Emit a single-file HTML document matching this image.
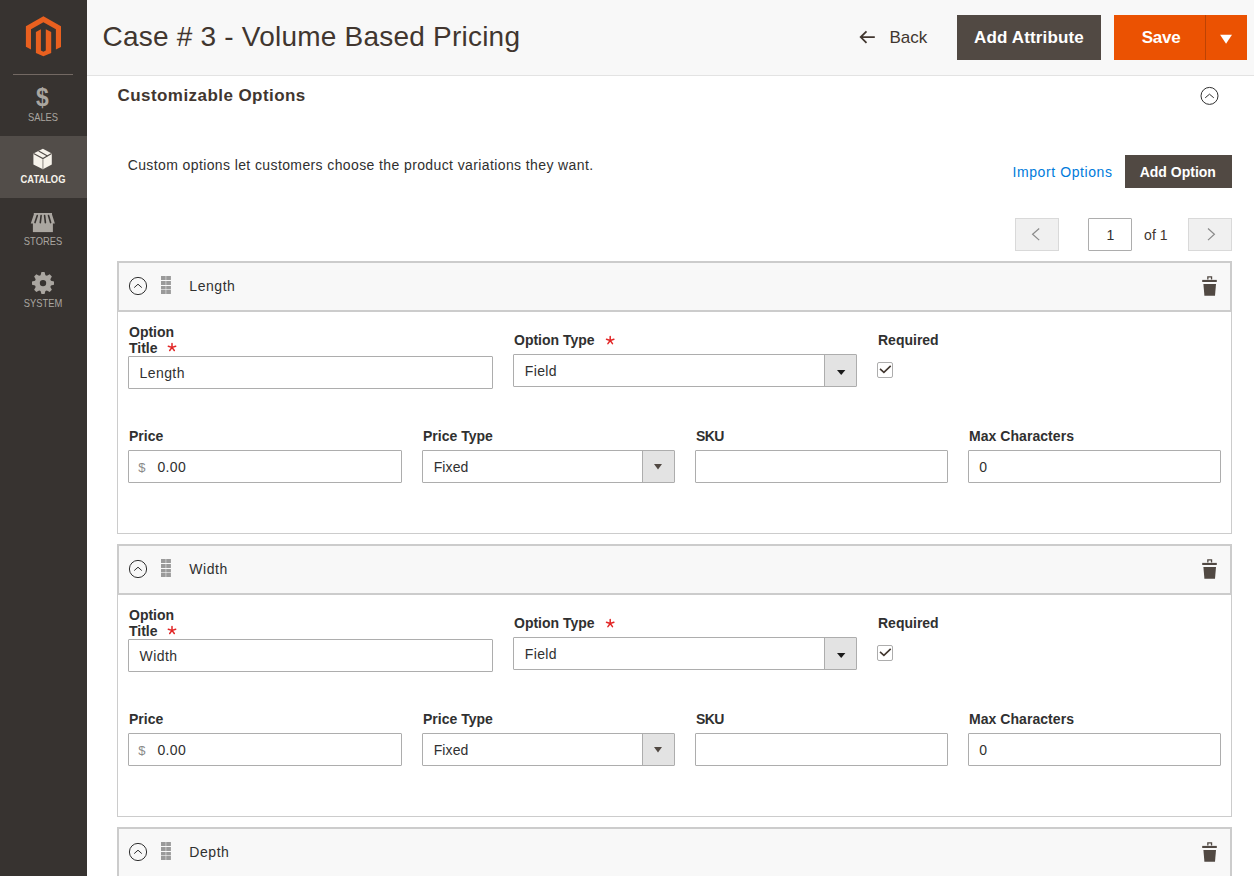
<!DOCTYPE html>
<html><head><meta charset="utf-8">
<style>
*{box-sizing:border-box;margin:0;padding:0}
html,body{width:1254px;height:876px;overflow:hidden;background:#fff}
body{position:relative;font-family:"Liberation Sans",sans-serif;color:#41362f}
.a{position:absolute;white-space:nowrap}
.nav{position:absolute;left:0;top:0;width:87px;height:876px;background:#373330}
.mi{left:0;width:86px;text-align:center;font-size:11px;color:#aaa6a0;line-height:12px;transform:scaleX(0.85)}
.act{position:absolute;left:0;top:136px;width:87px;height:62px;background:#524d49}
.hdr{position:absolute;left:87px;top:0;width:1167px;height:76px;background:#f8f8f8;border-bottom:1px solid #e3e3e3}
.lbl{font-weight:bold;color:#303030}
.txt{color:#303030}
.ls{letter-spacing:0.4px}
.inp{position:absolute;border:1px solid #adadad;border-radius:1px;background:#fff;height:33px}
.star{color:#e22626;font-weight:normal}
.ohd{position:absolute;left:117px;width:1115px;height:51px;background:#f8f8f8;border:2px solid #cccccc}
.obd{position:absolute;left:117px;width:1115px;height:222px;border:1px solid #cccccc;border-top:none;background:#fff}
.sarr{position:absolute;right:0;top:0;width:32px;height:31px;background:#e3e3e3;border-left:1px solid #adadad}

</style></head><body>
<div class="nav">
<div class="act"></div>
<svg class="a" style="left:0;top:0" width="87" height="320" viewBox="0 0 87 320">
<polygon fill="#e9601f" points="43.4,16.2 61,26.3 61,47 55.9,49.6 55.9,29.3 43.4,22.3 31,29.3 31,49.4 25.9,46.8 25.9,26.3"/>
<polygon fill="#e9601f" points="35.9,32 40.9,29.2 40.9,50.5 43.4,51.8 45.8,50.5 45.8,29.2 51.2,32 51.2,53 43.4,56.3 35.9,53"/>
<rect x="13" y="74" width="60" height="1" fill="#736963"/>
<!-- catalog box -->
<polygon points="42.9,148.7 51.8,153.5 51.8,164.5 42.9,169.2 33.4,164.5 33.4,153.5" fill="#f7f3eb"/>
<polyline points="33.6,153.6 42.9,158.6 51.6,153.6" fill="none" stroke="#524d49" stroke-width="1.1"/>
<line x1="38.6" y1="151.0" x2="47.5" y2="156.0" stroke="#524d49" stroke-width="1.1"/>
<rect x="42.2" y="159.2" width="1.4" height="10" fill="#a9a59f"/>
<!-- store -->
<polygon points="33.8,213 52,213 52,214.6 54.9,223.4 30.8,223.4 33.8,214.6" fill="#aaa6a0"/>
<rect x="32.9" y="223" width="20" height="9.1" fill="#aaa6a0"/>
<g stroke="#373330" stroke-width="1.6" stroke-linecap="round">
<line x1="37.3" y1="215.6" x2="35.0" y2="222.6"/>
<line x1="41.1" y1="215.6" x2="40.3" y2="222.6"/>
<line x1="44.6" y1="215.6" x2="45.4" y2="222.6"/>
<line x1="48.5" y1="215.6" x2="50.6" y2="222.6"/>
</g>
<!-- gear -->
<path d="M40.57,275.16 L41.46,272.11 L44.54,272.11 L45.43,275.16 L46.90,275.77 L49.68,274.24 L51.86,276.42 L50.33,279.20 L50.94,280.67 L53.99,281.56 L53.99,284.64 L50.94,285.53 L50.33,287.00 L51.86,289.78 L49.68,291.96 L46.90,290.43 L45.43,291.04 L44.54,294.09 L41.46,294.09 L40.57,291.04 L39.10,290.43 L36.32,291.96 L34.14,289.78 L35.67,287.00 L35.06,285.53 L32.01,284.64 L32.01,281.56 L35.06,280.67 L35.67,279.20 L34.14,276.42 L36.32,274.24 L39.10,275.77Z" fill="#aaa6a0"/>
<circle cx="43" cy="283.1" r="3.2" fill="#373330"/>
</svg>
<div class="a " style="left:36.2px;top:83.99px;font-size:26px;line-height:26px;font-weight:bold;color:#aaa6a0;transform:scaleX(0.88);transform-origin:0 0">$</div>
<div class="a mi" style="top:111.29px">SALES</div>
<div class="a mi" style="top:173.19px;font-weight:bold;color:#f7f3eb">CATALOG</div>
<div class="a mi" style="top:235.09px">STORES</div>
<div class="a mi" style="top:297.29px">SYSTEM</div>
</div>
<div class="hdr"></div>
<div class="a " style="left:102.5px;top:23.00px;font-size:28px;line-height:28px;color:#41362f;letter-spacing:0.22px">Case # 3 - Volume Based Pricing</div>
<svg class="a" style="left:858px;top:28px" width="20" height="18" viewBox="858 28 20 18"><path d="M866.5,31.3 L860.7,37.1 L866.5,42.9 M860.7,37.1 H874.8" fill="none" stroke="#41362f" stroke-width="1.8"/></svg>
<div class="a " style="left:889.4px;top:29.01px;font-size:17px;line-height:17px;color:#41362f;letter-spacing:0px">Back</div>
<div class="a" style="left:957px;top:15px;width:144px;height:45px;background:#514943"></div>
<div class="a " style="left:974px;top:29.01px;font-size:17px;line-height:17px;color:#fff;font-weight:bold;letter-spacing:0.15px">Add Attribute</div>
<div class="a" style="left:1114px;top:15px;width:133px;height:45px;background:#eb5202"></div>
<div class="a" style="left:1205px;top:15px;width:1px;height:45px;background:#bd4303"></div>
<div class="a " style="left:1141.8px;top:28.71px;font-size:17px;line-height:17px;color:#fff;font-weight:bold;letter-spacing:-0.3px">Save</div>
<svg class="a" style="left:1219px;top:34px" width="14" height="11" viewBox="1219 34 14 11"><polygon points="1220.1,34.8 1232,34.8 1226.05,43.7" fill="#fff"/></svg>
<div class="a " style="left:117.5px;top:86.61px;font-size:17px;line-height:17px;color:#41362f;font-weight:bold;letter-spacing:0.44px">Customizable Options</div>
<svg class="a" style="left:1199px;top:86px" width="21" height="21" viewBox="1199 86 21 21"><circle cx="1209.5" cy="95.9" r="8.5" fill="none" stroke="#303030" stroke-width="1"/><polyline points="1205.2,97.8 1209.5,94.2 1213.8,97.8" fill="none" stroke="#303030" stroke-width="1"/></svg>
<div class="a txt" style="left:127.7px;top:157.85px;font-size:14px;line-height:14px;letter-spacing:0.39px">Custom options let customers choose the product variations they want.</div>
<div class="a " style="left:1012.4px;top:164.75px;font-size:14px;line-height:14px;color:#007bdb;letter-spacing:0.6px">Import Options</div>
<div class="a" style="left:1125px;top:155px;width:107px;height:33px;background:#514943"></div>
<div class="a " style="left:1139.7px;top:164.75px;font-size:14px;line-height:14px;color:#fff;font-weight:bold;letter-spacing:0px">Add Option</div>
<div class="a" style="left:1015px;top:218px;width:44px;height:33px;background:#f0f0f0;border:1px solid #d9d9d9"></div>
<svg class="a" style="left:1030px;top:226px" width="12" height="16" viewBox="1030 226 12 16"><polyline points="1039.2,228.5 1032.6,234.3 1039.2,240.1" fill="none" stroke="#8a8a8a" stroke-width="1.2"/></svg>
<div class="a" style="left:1088px;top:218px;width:44px;height:33px;background:#fff;border:1px solid #adadad;border-radius:1px"></div>
<div class="a txt" style="left:1106.5px;top:228.15px;font-size:14px;line-height:14px;">1</div>
<div class="a " style="left:1144px;top:228.15px;font-size:14px;line-height:14px;letter-spacing:0.1px;color:#41362f">of 1</div>
<div class="a" style="left:1188px;top:218px;width:44px;height:33px;background:#f0f0f0;border:1px solid #d9d9d9"></div>
<svg class="a" style="left:1204px;top:226px" width="12" height="16" viewBox="1204 226 12 16"><polyline points="1208,228.5 1214.4,234.3 1208,240.1" fill="none" stroke="#8a8a8a" stroke-width="1.2"/></svg>
<div class="ohd" style="top:261px"></div>
<div class="obd" style="top:312px"></div>
<svg class="a" style="left:128px;top:276px" width="20" height="20" viewBox="0 0 20 20"><circle cx="10" cy="10" r="8.6" fill="none" stroke="#303030" stroke-width="1"/><polyline points="6.2,11.6 10,8.2 13.8,11.6" fill="none" stroke="#303030" stroke-width="1"/></svg>
<svg class="a" style="left:161px;top:276px" width="10" height="18" viewBox="0 0 10 18"><rect x="0" y="0" width="4.7" height="4" fill="#9a9a9a"/><rect x="5.2" y="0" width="4.7" height="4" fill="#9a9a9a"/><rect x="0" y="5" width="4.7" height="4" fill="#9a9a9a"/><rect x="5.2" y="5" width="4.7" height="4" fill="#9a9a9a"/><rect x="0" y="10" width="4.7" height="3.4" fill="#9a9a9a"/><rect x="5.2" y="10" width="4.7" height="3.4" fill="#9a9a9a"/><rect x="0" y="14" width="4.7" height="4" fill="#9a9a9a"/><rect x="5.2" y="14" width="4.7" height="4" fill="#9a9a9a"/></svg>
<div class="a txt" style="left:189.3px;top:279.15px;font-size:14px;line-height:14px;letter-spacing:0.55px">Length</div>
<svg class="a" style="left:1200px;top:274px" width="20" height="24" viewBox="1200 274 20 24"><path d="M1207.2,276.2h5v3.2h-1.3v-1.9h-2.4v1.9h-1.3z" fill="#514943"/><rect x="1202.2" y="279.9" width="14.6" height="2.1" fill="#514943"/><polygon points="1203.4,284 1216,284 1215,295.8 1204.4,295.8" fill="#514943"/></svg>
<div class="a lbl" style="left:129px;top:323.65px;line-height:16px;font-size:14px">Option<br>Title</div>
<svg class="a" style="left:0;top:0;overflow:visible" width="1" height="1"><path d="M172.00,347.40 L172.00,343.50 M172.00,347.40 L175.71,346.19 M172.00,347.40 L174.29,350.56 M172.00,347.40 L169.71,350.56 M172.00,347.40 L168.29,346.19 " stroke="#e22626" stroke-width="1.5" stroke-linecap="round" fill="none"/></svg>
<div class="inp" style="left:128px;top:356px;width:365px"></div>
<div class="a txt ls" style="left:139.6px;top:366.25px;font-size:14px;line-height:14px;">Length</div>
<div class="a lbl" style="left:514px;top:332.95px;font-size:14px;line-height:14px;">Option Type</div>
<svg class="a" style="left:0;top:0;overflow:visible" width="1" height="1"><path d="M610.20,340.50 L610.20,336.60 M610.20,340.50 L613.91,339.29 M610.20,340.50 L612.49,343.66 M610.20,340.50 L607.91,343.66 M610.20,340.50 L606.49,339.29 " stroke="#e22626" stroke-width="1.5" stroke-linecap="round" fill="none"/></svg>
<div class="inp" style="left:513px;top:354px;width:344px"><div class="sarr"></div></div>
<svg class="a" style="left:837px;top:370px" width="9" height="6" viewBox="0 0 9 6"><polygon points="0,0 8.4,0 4.2,5" fill="#1a1a1a"/></svg>
<div class="a txt ls" style="left:524.7px;top:364.15px;font-size:14px;line-height:14px;">Field</div>
<div class="a lbl" style="left:878px;top:333.25px;font-size:14px;line-height:14px;">Required</div>
<div class="a" style="left:877px;top:362px;width:16px;height:16px;border:1px solid #adadad;border-radius:2px;background:#fff"></div>
<svg class="a" style="left:877px;top:362px" width="16" height="16" viewBox="877 362 16 16"><polyline points="880,368.9 883.9,372.4 890.7,365.9" fill="none" stroke="#41362f" stroke-width="1.6"/></svg>
<div class="a lbl" style="left:129px;top:428.85px;font-size:14px;line-height:14px;">Price</div>
<div class="inp" style="left:128px;top:450px;width:274px"></div>
<div class="a txt" style="left:138.2px;top:460.60px;font-size:13px;line-height:13px;color:#8a8a8a">$</div>
<div class="a txt ls" style="left:157.4px;top:459.85px;font-size:14px;line-height:14px;">0.00</div>
<div class="a lbl" style="left:423px;top:429.15px;font-size:14px;line-height:14px;">Price Type</div>
<div class="inp" style="left:422px;top:450px;width:253px"><div class="sarr"></div></div>
<svg class="a" style="left:654px;top:464px" width="9" height="6" viewBox="0 0 9 6"><polygon points="0,0 8,0 4,5.4" fill="#514943"/></svg>
<div class="a txt" style="left:433.7px;top:460.25px;font-size:14px;line-height:14px;letter-spacing:0.1px">Fixed</div>
<div class="a lbl" style="left:696px;top:429.15px;font-size:14px;line-height:14px;letter-spacing:-0.6px">SKU</div>
<div class="inp" style="left:695px;top:450px;width:253px"></div>
<div class="a lbl" style="left:969px;top:429.15px;font-size:14px;line-height:14px;letter-spacing:0.05px">Max Characters</div>
<div class="inp" style="left:968px;top:450px;width:253px"></div>
<div class="a txt ls" style="left:979.3px;top:460.05px;font-size:14px;line-height:14px;">0</div>
<div class="ohd" style="top:544px"></div>
<div class="obd" style="top:595px"></div>
<svg class="a" style="left:128px;top:559px" width="20" height="20" viewBox="0 0 20 20"><circle cx="10" cy="10" r="8.6" fill="none" stroke="#303030" stroke-width="1"/><polyline points="6.2,11.6 10,8.2 13.8,11.6" fill="none" stroke="#303030" stroke-width="1"/></svg>
<svg class="a" style="left:161px;top:559px" width="10" height="18" viewBox="0 0 10 18"><rect x="0" y="0" width="4.7" height="4" fill="#9a9a9a"/><rect x="5.2" y="0" width="4.7" height="4" fill="#9a9a9a"/><rect x="0" y="5" width="4.7" height="4" fill="#9a9a9a"/><rect x="5.2" y="5" width="4.7" height="4" fill="#9a9a9a"/><rect x="0" y="10" width="4.7" height="3.4" fill="#9a9a9a"/><rect x="5.2" y="10" width="4.7" height="3.4" fill="#9a9a9a"/><rect x="0" y="14" width="4.7" height="4" fill="#9a9a9a"/><rect x="5.2" y="14" width="4.7" height="4" fill="#9a9a9a"/></svg>
<div class="a txt" style="left:189.3px;top:562.15px;font-size:14px;line-height:14px;letter-spacing:0.55px">Width</div>
<svg class="a" style="left:1200px;top:557px" width="20" height="24" viewBox="1200 274 20 24"><path d="M1207.2,276.2h5v3.2h-1.3v-1.9h-2.4v1.9h-1.3z" fill="#514943"/><rect x="1202.2" y="279.9" width="14.6" height="2.1" fill="#514943"/><polygon points="1203.4,284 1216,284 1215,295.8 1204.4,295.8" fill="#514943"/></svg>
<div class="a lbl" style="left:129px;top:606.65px;line-height:16px;font-size:14px">Option<br>Title</div>
<svg class="a" style="left:0;top:0;overflow:visible" width="1" height="1"><path d="M172.00,630.40 L172.00,626.50 M172.00,630.40 L175.71,629.19 M172.00,630.40 L174.29,633.56 M172.00,630.40 L169.71,633.56 M172.00,630.40 L168.29,629.19 " stroke="#e22626" stroke-width="1.5" stroke-linecap="round" fill="none"/></svg>
<div class="inp" style="left:128px;top:639px;width:365px"></div>
<div class="a txt ls" style="left:139.6px;top:649.25px;font-size:14px;line-height:14px;">Width</div>
<div class="a lbl" style="left:514px;top:615.95px;font-size:14px;line-height:14px;">Option Type</div>
<svg class="a" style="left:0;top:0;overflow:visible" width="1" height="1"><path d="M610.20,623.50 L610.20,619.60 M610.20,623.50 L613.91,622.29 M610.20,623.50 L612.49,626.66 M610.20,623.50 L607.91,626.66 M610.20,623.50 L606.49,622.29 " stroke="#e22626" stroke-width="1.5" stroke-linecap="round" fill="none"/></svg>
<div class="inp" style="left:513px;top:637px;width:344px"><div class="sarr"></div></div>
<svg class="a" style="left:837px;top:653px" width="9" height="6" viewBox="0 0 9 6"><polygon points="0,0 8.4,0 4.2,5" fill="#1a1a1a"/></svg>
<div class="a txt ls" style="left:524.7px;top:647.15px;font-size:14px;line-height:14px;">Field</div>
<div class="a lbl" style="left:878px;top:616.25px;font-size:14px;line-height:14px;">Required</div>
<div class="a" style="left:877px;top:645px;width:16px;height:16px;border:1px solid #adadad;border-radius:2px;background:#fff"></div>
<svg class="a" style="left:877px;top:645px" width="16" height="16" viewBox="877 362 16 16"><polyline points="880,368.9 883.9,372.4 890.7,365.9" fill="none" stroke="#41362f" stroke-width="1.6"/></svg>
<div class="a lbl" style="left:129px;top:711.85px;font-size:14px;line-height:14px;">Price</div>
<div class="inp" style="left:128px;top:733px;width:274px"></div>
<div class="a txt" style="left:138.2px;top:743.60px;font-size:13px;line-height:13px;color:#8a8a8a">$</div>
<div class="a txt ls" style="left:157.4px;top:742.85px;font-size:14px;line-height:14px;">0.00</div>
<div class="a lbl" style="left:423px;top:712.15px;font-size:14px;line-height:14px;">Price Type</div>
<div class="inp" style="left:422px;top:733px;width:253px"><div class="sarr"></div></div>
<svg class="a" style="left:654px;top:747px" width="9" height="6" viewBox="0 0 9 6"><polygon points="0,0 8,0 4,5.4" fill="#514943"/></svg>
<div class="a txt" style="left:433.7px;top:743.25px;font-size:14px;line-height:14px;letter-spacing:0.1px">Fixed</div>
<div class="a lbl" style="left:696px;top:712.15px;font-size:14px;line-height:14px;letter-spacing:-0.6px">SKU</div>
<div class="inp" style="left:695px;top:733px;width:253px"></div>
<div class="a lbl" style="left:969px;top:712.15px;font-size:14px;line-height:14px;letter-spacing:0.05px">Max Characters</div>
<div class="inp" style="left:968px;top:733px;width:253px"></div>
<div class="a txt ls" style="left:979.3px;top:743.05px;font-size:14px;line-height:14px;">0</div>
<div class="ohd" style="top:827px"></div>
<div class="obd" style="top:878px"></div>
<svg class="a" style="left:128px;top:842px" width="20" height="20" viewBox="0 0 20 20"><circle cx="10" cy="10" r="8.6" fill="none" stroke="#303030" stroke-width="1"/><polyline points="6.2,11.6 10,8.2 13.8,11.6" fill="none" stroke="#303030" stroke-width="1"/></svg>
<svg class="a" style="left:161px;top:842px" width="10" height="18" viewBox="0 0 10 18"><rect x="0" y="0" width="4.7" height="4" fill="#9a9a9a"/><rect x="5.2" y="0" width="4.7" height="4" fill="#9a9a9a"/><rect x="0" y="5" width="4.7" height="4" fill="#9a9a9a"/><rect x="5.2" y="5" width="4.7" height="4" fill="#9a9a9a"/><rect x="0" y="10" width="4.7" height="3.4" fill="#9a9a9a"/><rect x="5.2" y="10" width="4.7" height="3.4" fill="#9a9a9a"/><rect x="0" y="14" width="4.7" height="4" fill="#9a9a9a"/><rect x="5.2" y="14" width="4.7" height="4" fill="#9a9a9a"/></svg>
<div class="a txt" style="left:189.3px;top:845.15px;font-size:14px;line-height:14px;letter-spacing:0.55px">Depth</div>
<svg class="a" style="left:1200px;top:840px" width="20" height="24" viewBox="1200 274 20 24"><path d="M1207.2,276.2h5v3.2h-1.3v-1.9h-2.4v1.9h-1.3z" fill="#514943"/><rect x="1202.2" y="279.9" width="14.6" height="2.1" fill="#514943"/><polygon points="1203.4,284 1216,284 1215,295.8 1204.4,295.8" fill="#514943"/></svg>
<div class="a lbl" style="left:129px;top:889.65px;line-height:16px;font-size:14px">Option<br>Title</div>
<svg class="a" style="left:0;top:0;overflow:visible" width="1" height="1"><path d="M172.00,913.40 L172.00,909.50 M172.00,913.40 L175.71,912.19 M172.00,913.40 L174.29,916.56 M172.00,913.40 L169.71,916.56 M172.00,913.40 L168.29,912.19 " stroke="#e22626" stroke-width="1.5" stroke-linecap="round" fill="none"/></svg>
<div class="inp" style="left:128px;top:922px;width:365px"></div>
<div class="a txt ls" style="left:139.6px;top:932.25px;font-size:14px;line-height:14px;">Depth</div>
<div class="a lbl" style="left:514px;top:898.95px;font-size:14px;line-height:14px;">Option Type</div>
<svg class="a" style="left:0;top:0;overflow:visible" width="1" height="1"><path d="M610.20,906.50 L610.20,902.60 M610.20,906.50 L613.91,905.29 M610.20,906.50 L612.49,909.66 M610.20,906.50 L607.91,909.66 M610.20,906.50 L606.49,905.29 " stroke="#e22626" stroke-width="1.5" stroke-linecap="round" fill="none"/></svg>
<div class="inp" style="left:513px;top:920px;width:344px"><div class="sarr"></div></div>
<svg class="a" style="left:837px;top:936px" width="9" height="6" viewBox="0 0 9 6"><polygon points="0,0 8.4,0 4.2,5" fill="#1a1a1a"/></svg>
<div class="a txt ls" style="left:524.7px;top:930.15px;font-size:14px;line-height:14px;">Field</div>
<div class="a lbl" style="left:878px;top:899.25px;font-size:14px;line-height:14px;">Required</div>
<div class="a" style="left:877px;top:928px;width:16px;height:16px;border:1px solid #adadad;border-radius:2px;background:#fff"></div>
<svg class="a" style="left:877px;top:928px" width="16" height="16" viewBox="877 362 16 16"><polyline points="880,368.9 883.9,372.4 890.7,365.9" fill="none" stroke="#41362f" stroke-width="1.6"/></svg>
<div class="a lbl" style="left:129px;top:994.85px;font-size:14px;line-height:14px;">Price</div>
<div class="inp" style="left:128px;top:1016px;width:274px"></div>
<div class="a txt" style="left:138.2px;top:1026.60px;font-size:13px;line-height:13px;color:#8a8a8a">$</div>
<div class="a txt ls" style="left:157.4px;top:1025.85px;font-size:14px;line-height:14px;">0.00</div>
<div class="a lbl" style="left:423px;top:995.15px;font-size:14px;line-height:14px;">Price Type</div>
<div class="inp" style="left:422px;top:1016px;width:253px"><div class="sarr"></div></div>
<svg class="a" style="left:654px;top:1030px" width="9" height="6" viewBox="0 0 9 6"><polygon points="0,0 8,0 4,5.4" fill="#514943"/></svg>
<div class="a txt" style="left:433.7px;top:1026.25px;font-size:14px;line-height:14px;letter-spacing:0.1px">Fixed</div>
<div class="a lbl" style="left:696px;top:995.15px;font-size:14px;line-height:14px;letter-spacing:-0.6px">SKU</div>
<div class="inp" style="left:695px;top:1016px;width:253px"></div>
<div class="a lbl" style="left:969px;top:995.15px;font-size:14px;line-height:14px;letter-spacing:0.05px">Max Characters</div>
<div class="inp" style="left:968px;top:1016px;width:253px"></div>
<div class="a txt ls" style="left:979.3px;top:1026.05px;font-size:14px;line-height:14px;">0</div>
</body></html>
